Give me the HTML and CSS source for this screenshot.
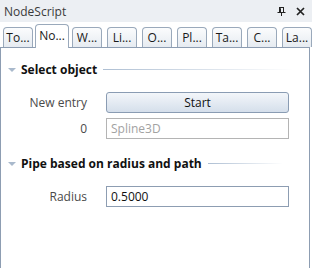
FILE: index.html
```html
<!DOCTYPE html>
<html>
<head>
<meta charset="utf-8">
<link rel="stylesheet" href="styles.css">
</head>
<body>
<div class="window">
  <div class="titlebar">
    <span class="title">NodeScript</span>
    <div class="tools">
      <svg class="pin" width="9" height="9" viewBox="0 0 9 9"><path d="M2 0.5h5M2.5 0.5v5M6.5 0.5v5M2.5 1.5h1v4M0.5 5.5h8M4.5 5.5v3.5" stroke="#222" stroke-width="1" fill="none"/></svg>
      <svg class="close" width="9" height="9" viewBox="0 0 9 9"><path d="M1 1L8 8M8 1L1 8" stroke="#222" stroke-width="1.7" fill="none"/></svg>
    </div>
  </div>
  <div class="tabs">
    <div class="tab">To...</div>
    <div class="tab active">No...</div>
    <div class="tab">W...</div>
    <div class="tab">Li...</div>
    <div class="tab">O...</div>
    <div class="tab">Pl...</div>
    <div class="tab">Ta...</div>
    <div class="tab">C...</div>
    <div class="tab">La...</div>
  </div>
  <div class="panel">
    <div class="group">
      <div class="group-head"><span class="tri"></span><span class="group-title">Select object</span><span class="rule"></span></div>
      <div class="row first"><span class="label">New entry</span><button class="btn">Start</button></div>
      <div class="row"><span class="label">0</span><div class="field placeholder">Spline3D</div></div>
    </div>
    <div class="group">
      <div class="group-head"><span class="tri"></span><span class="group-title">Pipe based on radius and path</span><span class="rule short"></span></div>
      <div class="row first"><span class="label">Radius</span><div class="field active">0.5000</div></div>
    </div>
  </div>
</div>
</body>
</html>
```
FILE: styles.css
```css
html, body {
  margin: 0;
  padding: 0;
  background: #ffffff;
}
body {
  font-family: "Open Sans", "Noto Sans", sans-serif;
  font-size: 11.5px;
  color: #1e1e1e;
}
.window {
  width: 312px;
  height: 268px;
  display: flex;
  flex-direction: column;
  overflow: hidden;
  background: #ffffff;
}
.titlebar {
  height: 22px;
  flex: none;
  display: flex;
  align-items: center;
  justify-content: space-between;
  background: #eceff3;
  padding: 0 7px 0 4px;
}
.title {
  color: #3a3a3a;
  font-size: 12px;
}
.tools {
  display: flex;
  align-items: center;
  gap: 10px;
}
.tabs {
  height: 25px;
  flex: none;
  display: flex;
  align-items: flex-end;
  padding-left: 3px;
  gap: 5px;
  position: relative;
  z-index: 1;
}
.tab {
  width: 28px;
  height: 19px;
  border: 1px solid #9aa9bb;
  border-bottom: none;
  border-radius: 4px 4px 0 0;
  background: linear-gradient(#fbfcfd, #e6ebf1);
  display: flex;
  align-items: center;
  justify-content: center;
  color: #1a1a1a;
  font-size: 12px;
  box-sizing: content-box;
}
.tab.active {
  width: 32px;
  height: 23px;
  margin: 0 -2px -1px -3px;
  background: #ffffff;
  align-items: flex-start;
  padding-top: 0;
  line-height: 22px;
}
.panel {
  flex: 1;
  border: 1px solid #8d9db2;
  border-bottom: none;
  margin-right: 2px;
  padding-top: 13px;
}
.group {
  display: flex;
  flex-direction: column;
}
.group + .group {
  margin-top: 16px;
}
.group-head {
  height: 16px;
  display: flex;
  align-items: center;
  padding-left: 7px;
}
.tri {
  width: 0;
  height: 0;
  border-left: 4px solid transparent;
  border-right: 4px solid transparent;
  border-top: 4px solid #a9b9cc;
  margin-right: 5px;
  margin-top: 2px;
}
.group-title {
  font-weight: bold;
  font-size: 12px;
  color: #111;
}
.rule {
  height: 1px;
  width: 190px;
  margin-left: 6px;
  background: linear-gradient(to right, #aebfd3, #ffffff);
}
.rule.short {
  width: 75px;
}
.row {
  display: grid;
  grid-template-columns: 86px 183px;
  column-gap: 19px;
  align-items: center;
  height: 21px;
  margin-top: 5px;
}
.row.first {
  margin-top: 15px;
}
.label {
  text-align: right;
  color: #4a4a4a;
  font-size: 12px;
}
.btn {
  height: 21px;
  border: 1px solid #8a9cb3;
  border-radius: 3px;
  background: linear-gradient(#f3f6fa, #d5dfeb);
  font-family: inherit;
  font-size: 12px;
  color: #111;
  padding: 0;
}
.field {
  height: 21px;
  box-sizing: border-box;
  border: 1px solid #b4b4b4;
  padding-left: 4px;
  display: flex;
  align-items: center;
  font-size: 12px;
}
.field.placeholder {
  color: #a2a2a2;
}
.field.active {
  border-color: #8d9db2;
  color: #111;
}
```
